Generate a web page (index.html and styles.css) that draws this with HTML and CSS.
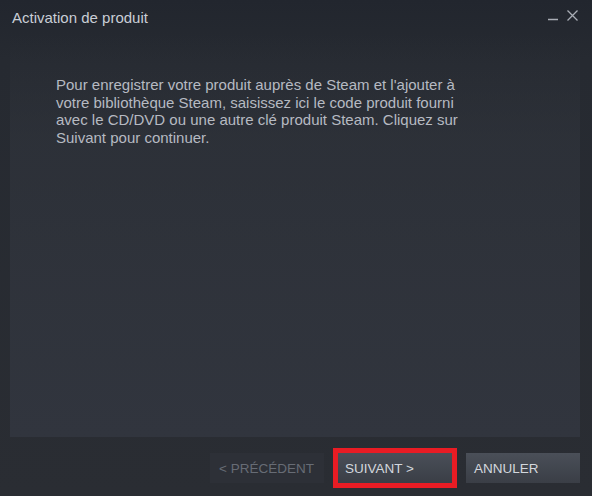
FILE: index.html
```html
<!DOCTYPE html>
<html lang="fr">
<head>
    <meta charset="UTF-8">
    <title>Activation de produit</title>
    <link rel="stylesheet" href="styles.css">
</head>
<body>

<div class="window">
    <div class="titlebar">
        <span class="title">Activation de produit</span>
        <div class="controls">
            <svg width="12" height="12" viewBox="0 0 12 12"><line x1="1" y1="10.5" x2="11" y2="10.5" stroke="#a9adb5" stroke-width="1.5"/></svg>
            <svg width="13" height="13" viewBox="0 0 13 13"><path d="M1.5 1.5 L11.5 11.5 M11.5 1.5 L1.5 11.5" stroke="#a9adb5" stroke-width="1.3"/></svg>
        </div>
    </div>

    <div class="panel">
        <p class="intro">Pour enregistrer votre produit auprès de Steam et l'ajouter à votre bibliothèque Steam, saisissez ici le code produit fourni avec le CD/DVD ou une autre clé produit Steam. Cliquez sur Suivant pour continuer.</p>
    </div>

    <div class="buttons">
        <button class="btn disabled">&lt; PRÉCÉDENT</button>
        <button class="btn active">SUIVANT &gt;</button>
        <button class="btn">ANNULER</button>
    </div>
</div>

</body>
</html>
```

FILE: styles.css
```css
body {
    margin: 0;
    padding: 0;
    font-family: 'Liberation Sans', Arial, sans-serif;
    background: #2a2d33;
}
.window {
    width: 592px;
    height: 496px;
    display: flex;
    flex-direction: column;
    background: linear-gradient(to bottom, #22262e 0px, #262a31 60px, #2a2d33 496px);
}
.titlebar {
    height: 34px;
    display: flex;
    justify-content: space-between;
    align-items: flex-start;
    padding: 0 13px 0 12px;
}
.title {
    color: #c9ced6;
    font-size: 15px;
    margin-top: 9px;
}
.controls {
    display: flex;
    gap: 7px;
    margin-top: 9px;
}
.panel {
    flex: 1;
    margin: 0 12px 0 10px;
    background: linear-gradient(to bottom, rgba(48, 52, 60, 0) 0%, rgba(48, 52, 60, 0.6) 25%, #31353e 100%);
    padding: 42px 46px 0 46px;
}
.intro {
    margin: 0;
    color: #b6bac2;
    font-size: 15px;
    line-height: 17.7px;
    width: 420px;
}
.buttons {
    height: 59px;
    display: flex;
    justify-content: flex-end;
    align-items: flex-start;
    gap: 14px;
    padding: 16px 12px 0 0;
    box-sizing: border-box;
}
.btn {
    width: 114px;
    height: 30px;
    border: none;
    padding: 0 0 0 8px;
    text-align: left;
    font-family: 'Liberation Sans', Arial, sans-serif;
    font-size: 13.5px;
    color: #d3d7dd;
    background: linear-gradient(to bottom, #4a4f58, #3a3e46);
}
.btn.disabled {
    color: #676c75;
    background: #2d3037;
    padding-left: 9px;
}
.btn.active {
    outline: 5px solid #e91c24;
    padding-left: 7px;
}
```
